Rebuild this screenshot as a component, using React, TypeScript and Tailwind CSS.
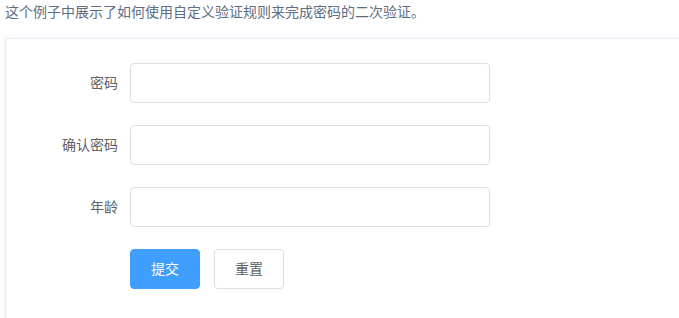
const fields = ["密码", "确认密码", "年龄"];

export default function App() {
  return (
    <div
      className="h-screen overflow-hidden bg-white pl-[5px]"
      style={{ fontFamily: '"Liberation Sans", "Noto Sans CJK SC", sans-serif' }}
    >
      <p className="pt-[2px] text-[14px] leading-[21px] text-[#5e6d82]">
        这个例子中展示了如何使用自定义验证规则来完成密码的二次验证。
      </p>

      <div className="mt-[15px] w-[760px] rounded-[3px] border border-[#ebebeb] px-6 pt-6 pb-[46px] shadow-[0_0_8px_0_rgba(232,237,250,0.6),0_2px_4px_0_rgba(232,237,250,0.5)]">
        <form className="flex flex-col gap-[22px]">
          {fields.map((label) => (
            <div key={label} className="flex">
              <label className="w-[100px] shrink-0 pr-3 text-right text-[14px] leading-[40px] text-[#606266]">
                {label}
              </label>
              <input
                type="text"
                className="h-10 w-[360px] rounded border border-[#dcdfe6] px-[15px] text-[14px] text-[#606266] outline-none"
              />
            </div>
          ))}

          <div className="flex pl-[100px]">
            <button
              type="button"
              className="h-10 w-[70px] rounded border border-[#409eff] bg-[#409eff] text-[14px] text-white"
            >
              提交
            </button>
            <button
              type="button"
              className="ml-[14px] h-10 w-[70px] rounded border border-[#dcdfe6] bg-white text-[14px] text-[#606266]"
            >
              重置
            </button>
          </div>
        </form>
      </div>
    </div>
  );
}
